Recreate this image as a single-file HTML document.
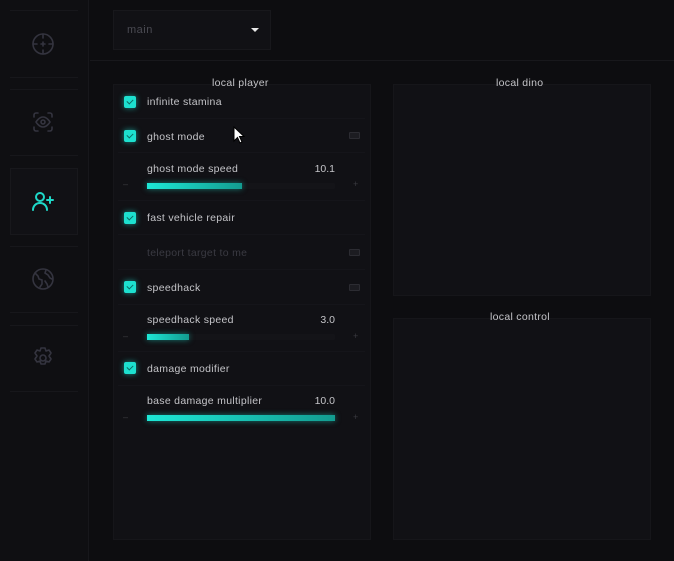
<!DOCTYPE html>
<html><head><style>
*{margin:0;padding:0;box-sizing:border-box}
body{width:674px;height:561px;background:#0d0d10;font-family:"Liberation Sans",sans-serif;position:relative;overflow:hidden;color:#c8c8cc}
.a{position:absolute}
.sep{position:absolute;left:10px;width:68px;height:1px;background:#17171b}
.cb{position:absolute;left:124px;width:12px;height:12px;background:#1de0cf;border-radius:2px;box-shadow:0 0 6px rgba(29,224,207,.6)}
.cb:after{content:"";position:absolute;left:4px;top:2px;width:3px;height:5px;border:solid #0a6a60;border-width:0 1px 1px 0;transform:rotate(45deg)}
.t{position:absolute;left:147px;font-size:10.5px;color:#c4c4c8;letter-spacing:.3px}
.track{position:absolute;left:147px;width:188px;height:6px;background:#141418;border-radius:1px}
.fill{height:6px;background:linear-gradient(90deg,#1de8d6,#139c90);box-shadow:0 0 6px rgba(29,224,207,.5)}
.pm{position:absolute;font-size:9px;color:#3a3a40}
.kb{position:absolute;left:349px;width:11px;height:7px;border:1px solid #2c2c32;background:#1c1c21;border-radius:1px}
.v{position:absolute;font-size:10.5px;color:#c4c4c8;right:339px}
.line{position:absolute;left:118px;width:247px;height:1px;background:#15151a}
.h{position:absolute;font-size:10.5px;color:#c4c4c8;letter-spacing:.3px}
</style></head><body>
<div class="a" style="left:0;top:0;width:89px;height:561px;background:#0f0f12;border-right:1px solid #17171b"></div>
<div class="sep" style="top:10px"></div>
<div class="sep" style="top:77px"></div>
<div class="sep" style="top:89px"></div>
<div class="sep" style="top:155px"></div>
<div class="a" style="left:10px;top:168px;width:68px;height:67px;background:#111115;border:1px solid #18181c"></div>
<div class="sep" style="top:246px"></div>
<div class="sep" style="top:312px"></div>
<div class="sep" style="top:325px"></div>
<div class="sep" style="top:391px"></div>
<svg class="a" style="left:31px;top:32px" width="24" height="24" viewBox="0 0 24 24" fill="none" stroke="#34343f" stroke-width="1.6" stroke-linecap="round"><circle cx="12" cy="12" r="10"/><path d="M12 2v4M12 18v4M2 12h4M18 12h4M12 10v4M10 12h4"/></svg>
<svg class="a" style="left:31px;top:110px" width="24" height="24" viewBox="0 0 24 24" fill="none" stroke="#34343f" stroke-width="1.6" stroke-linecap="round"><path d="M3 7V5a2 2 0 0 1 2-2h2M17 3h2a2 2 0 0 1 2 2v2M21 17v2a2 2 0 0 1-2 2h-2M7 21H5a2 2 0 0 1-2-2v-2"/><path d="M5 12s3-5 7-5 7 5 7 5-3 5-7 5-7-5-7-5z"/><circle cx="12" cy="12" r="2"/></svg>
<svg class="a" style="left:31px;top:189px" width="24" height="24" viewBox="0 0 24 24" fill="none" stroke="#1ed8c8" stroke-width="2" stroke-linecap="round"><circle cx="9" cy="8" r="4"/><path d="M2 21c0-4 3-7 7-7s7 3 7 7M19 8v6M16 11h6"/></svg>
<svg class="a" style="left:31px;top:267px" width="24" height="24" viewBox="0 0 24 24" fill="none" stroke="#34343f" stroke-width="1.6" stroke-linecap="round"><circle cx="12" cy="12" r="10"/><path d="M4 6l3 3 1 3 3 1 0 4-2 3M15 3l-1 3 3 2 2 3 2 1M14 14l2 3 1 3"/></svg>
<svg class="a" style="left:31px;top:346px" width="24" height="24" viewBox="0 0 24 24" fill="none" stroke="#34343f" stroke-width="1.6" stroke-linejoin="round"><path d="M10 2h4l1 3 3-1 2 3-2 3 2 3-2 3-3-1-1 3h-4l-1-3-3 1-2-3 2-3-2-3 2-3 3 1z"/><circle cx="12" cy="12" r="3"/></svg>

<div class="a" style="left:90px;top:60px;width:584px;height:1px;background:#18181c"></div>
<div class="a" style="left:113px;top:10px;width:158px;height:40px;background:#111115;border:1px solid #18181c"></div>
<div class="a" style="left:127px;top:24px;font-size:11px;color:#4a4a52;letter-spacing:.5px">main</div>
<div class="a" style="left:251px;top:28px;width:0;height:0;border-left:4px solid transparent;border-right:4px solid transparent;border-top:4px solid #e8e8e8"></div>

<div class="a" style="left:113px;top:84px;width:258px;height:456px;background:#111115;border:1px solid #16161a"></div>
<div class="h" style="left:212px;top:77px">local player</div>
<div class="a" style="left:393px;top:84px;width:258px;height:212px;background:#111115;border:1px solid #16161a"></div>
<div class="h" style="left:496px;top:77px">local dino</div>
<div class="a" style="left:393px;top:318px;width:258px;height:222px;background:#111115;border:1px solid #16161a"></div>
<div class="h" style="left:490px;top:311px">local control</div>

<div class="cb" style="top:96px"></div><div class="t" style="top:96px">infinite stamina</div>
<div class="line" style="top:118px"></div>
<div class="cb" style="top:130px"></div><div class="t" style="top:131px">ghost mode</div><div class="kb" style="top:132px"></div>
<div class="line" style="top:152px"></div>
<div class="t" style="top:163px">ghost mode speed</div><div class="v" style="top:163px">10.1</div>
<div class="pm" style="left:123px;top:179px">–</div><div class="pm" style="left:353px;top:179px">+</div>
<div class="track" style="top:183px"><div class="fill" style="width:95px"></div></div>
<div class="line" style="top:200px"></div>
<div class="cb" style="top:212px"></div><div class="t" style="top:212px">fast vehicle repair</div>
<div class="line" style="top:234px"></div>
<div class="t" style="top:247px;color:#3a3a42">teleport target to me</div><div class="kb" style="top:249px"></div>
<div class="line" style="top:269px"></div>
<div class="cb" style="top:281px"></div><div class="t" style="top:282px">speedhack</div><div class="kb" style="top:284px"></div>
<div class="line" style="top:304px"></div>
<div class="t" style="top:314px">speedhack speed</div><div class="v" style="top:314px">3.0</div>
<div class="pm" style="left:123px;top:331px">–</div><div class="pm" style="left:353px;top:331px">+</div>
<div class="track" style="top:334px"><div class="fill" style="width:42px"></div></div>
<div class="line" style="top:351px"></div>
<div class="cb" style="top:362px"></div><div class="t" style="top:363px">damage modifier</div>
<div class="line" style="top:385px"></div>
<div class="t" style="top:395px">base damage multiplier</div><div class="v" style="top:395px">10.0</div>
<div class="pm" style="left:123px;top:412px">–</div><div class="pm" style="left:353px;top:412px">+</div>
<div class="track" style="top:415px"><div class="fill" style="width:188px"></div></div>

<svg class="a" style="left:233px;top:126px" width="12" height="18" viewBox="0 0 12 18"><path d="M1 1v14l3.5-3.5 2.5 5.5 2-1-2.5-5.5H11z" fill="#fff" stroke="#000" stroke-width="1"/></svg>
</body></html>
